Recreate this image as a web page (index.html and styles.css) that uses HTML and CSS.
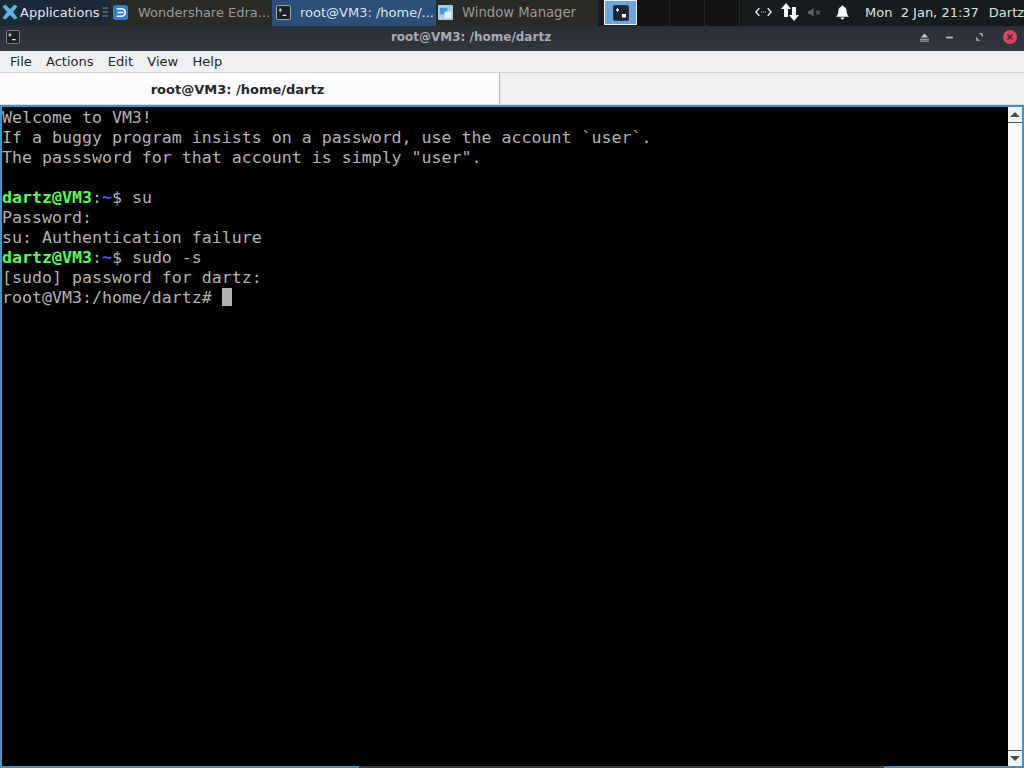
FILE: index.html
```html
<!DOCTYPE html>
<html lang="en">
<head>
<meta charset="utf-8">
<title>root@VM3: /home/dartz</title>
<link rel="stylesheet" href="styles.css">
</head>
<body>
<header class="panel">
  <div class="apps">
    <svg class="xfce" viewBox="0 0 16 16"><path d="M0.500 2.500 L3.500 0.500 L8 5 L12.500 0.500 L15.500 2.500 L11 8 L15.500 14 L12.500 15.500 L8 11 L3.500 15.500 L0.500 14 L5 8 Z" fill="#5fb4e6"/></svg>
    <span>Applications</span>
    <svg class="grip" viewBox="0 0 5 10"><path d="M0 1h5M0 5h5M0 9h5" stroke="#8a9094" stroke-width="1"/></svg>
  </div>
  <div class="task task-dim task-edraw">
    <svg class="ticon" viewBox="0 0 16 16"><rect width="16" height="16" rx="3" fill="#2e7de0"/><path d="M4 4h5a4 4 0 0 1 0 8H4M5 8h6" fill="none" stroke="#fff" stroke-width="1.8"/></svg>
    <span>Wondershare Edra...</span>
  </div>
  <div class="task task-active">
    <svg class="ticon" viewBox="0 0 16 16"><rect x=".5" y=".5" width="15" height="15" rx="1.5" fill="#1c2126" stroke="#aab0b6"/><path d="M3 5.5h3M7 11h4" stroke="#eee" stroke-width="1.4"/><path d="M4.500 3v5" stroke="#eee" stroke-width=".8"/></svg>
    <span>root@VM3: /home/...</span>
  </div>
  <div class="task task-dim task-wm">
    <svg class="ticon" viewBox="0 0 16 16"><rect width="16" height="16" rx="1" fill="#9fd0ee"/><rect x="2" y="3" width="8" height="7" fill="#4a94cf"/><rect x="7" y="7" width="7" height="7" fill="#e8f4fb"/></svg>
    <span>Window Manager</span>
  </div>
  <div class="pager">
    <svg class="pager-icon" viewBox="0 0 16 16"><rect x=".5" y=".5" width="15" height="15" rx="1.5" fill="#1c2634" stroke="#2c3a4c"/><path d="M3 5h3" stroke="#eee" stroke-width="1.6"/><path d="M4.500 3v4" stroke="#eee" stroke-width=".8"/><rect x="9" y="9" width="4" height="3.5" fill="#fff"/></svg>
  </div>
  <div class="pager-rest"><i class="sep"></i><i class="sep"></i><i class="sep"></i></div>
  <div class="tray">
    <svg class="ti-net" viewBox="0 0 18 10"><path d="M4.500 1 L1 5 L4.500 9 M13.500 1 L17 5 L13.500 9" fill="none" stroke="#e6e8ea" stroke-width="1.500"/><path d="M6.500 5h1M8.500 5h1M10.500 5h1" stroke="#e6e8ea"/></svg>
    <svg class="ti-arrows" viewBox="0 0 18 18"><path d="M5 0 L10 6 H7 V14 H3 V6 H0 Z M13 18 L18 12 H15 V4 H11 V12 H8 Z" fill="#f4f6f7"/></svg>
    <svg class="ti-sound" viewBox="0 0 14 10"><path d="M0 3h2.500L6 0v10L2.500 7H0Z" fill="#5b6367"/><path d="M9 3l4 4M13 3l-4 4" stroke="#5b6367" stroke-width="1.300"/></svg>
    <svg class="ti-bell" viewBox="0 0 14 15"><path d="M7 0a1.300 1.300 0 0 1 1.300 1.300C10.800 2 11.500 4 11.500 6.500c0 2.500.8 3.800 2.500 5.500H0c1.700-1.700 2.500-3 2.500-5.500C2.500 4 3.200 2 5.700 1.300A1.300 1.300 0 0 1 7 0ZM5 13h4a2 2 0 0 1-4 0Z" fill="#f6f7f8"/></svg>
    <span class="clock">Mon&nbsp; 2 Jan, 21:37</span>
    <span class="user">Dartz</span>
  </div>
</header>

<div class="titlebar">
  <svg class="win-icon" viewBox="0 0 16 16"><rect x=".5" y=".5" width="15" height="15" rx="1.5" fill="#1c2126" stroke="#8f959b"/><path d="M3 5.500h3M7 11h4" stroke="#eee" stroke-width="1.400"/><path d="M4.500 3v5" stroke="#eee" stroke-width=".8"/></svg>
  <div class="win-title">root@VM3: /home/dartz</div>
  <div class="win-buttons">
    <svg class="wb wb-shade" viewBox="0 0 10 9"><path d="M5 0 L9 4.500 H1 Z" fill="#c2c5c9"/><path d="M0 6.500h10M0 8.500h10" stroke="#c2c5c9"/></svg>
    <svg class="wb wb-min" viewBox="0 0 8 3"><rect y=".5" width="8" height="2" fill="#b4b7bb"/></svg>
    <svg class="wb wb-max" viewBox="0 0 8 9"><path d="M3 0h5v5Z M0 4l5 5H0Z" fill="#8f9296"/></svg>
    <svg class="wb wb-close" viewBox="0 0 14 14"><circle cx="7" cy="7" r="7" fill="#d9465f"/><path d="M4.500 4.500l5 5M9.500 4.500l-5 5" stroke="#5a2430" stroke-width="1.600"/></svg>
  </div>
</div>

<nav class="menubar">
  <span>File</span><span>Actions</span><span>Edit</span><span>View</span><span>Help</span>
</nav>

<div class="tabbar">
  <div class="tab">root@VM3: /home/dartz</div>
</div>

<main class="window-body">
<pre class="terminal">Welcome to VM3!
If a buggy program insists on a password, use the account `user`.
The passsword for that account is simply "user".

<b class="g">dartz@VM3</b>:<b class="p">~</b>$ su
Password: 
su: Authentication failure
<b class="g">dartz@VM3</b>:<b class="p">~</b>$ sudo -s
[sudo] password for dartz: 
root@VM3:/home/dartz# <span class="cursor"> </span></pre>
  <div class="scrollbar">
    <div class="sb-btn sb-up"><i class="arrow-up"></i></div>
    <div class="sb-track"></div>
    <div class="sb-btn sb-down"><i class="arrow-down"></i></div>
  </div>
</main>
<div class="bottom"><div class="bottom-blue"></div><div class="bottom-dark"></div></div>
</body>
</html>
```

FILE: styles.css
```css
* { box-sizing: border-box; }
html, body { margin: 0; height: 100%; }
body {
  width: 1024px;
  height: 768px;
  overflow: hidden;
  display: flex;
  flex-direction: column;
  font-family: "DejaVu Sans", sans-serif;
  font-size: 13px;
  background: #000;
}
svg { display: block; flex: none; }

.panel {
  flex: none;
  height: 26px;
  display: flex;
  align-items: stretch;
  background: #161c1e;
  color: #e4e8ea;
}
.panel > * { flex: none; }
.apps {
  width: 110px;
  display: flex;
  align-items: center;
  padding-left: 2px;
  padding-bottom: 2px;
  background: #1a2a36;
}
.xfce { width: 16px; height: 16px; margin-right: 2px; }
.grip { width: 5px; height: 10px; margin-left: 4px; }
.task {
  display: flex;
  align-items: center;
  padding-bottom: 2px;
  white-space: nowrap;
  overflow: hidden;
}
.ticon { width: 15px; height: 15px; margin-right: 10px; }
.task-dim { background: #2a2a27; color: #9a9a96; }
.task-edraw { width: 162px; padding-left: 3px; }
.task-active { width: 164px; background: #2a4f78; color: #dfe5ec; padding-left: 4px; padding-right: 0; }
.task-active .ticon { margin-right: 9px; }
.task-wm { width: 162px; padding-left: 2px; font-size: 13.200px; }
.task-wm .ticon { margin-right: 9px; }
.pager {
  width: 33px;
  height: 25px;
  margin-left: 6px;
  display: flex;
  align-items: center;
  justify-content: center;
  background: #6aa5dd;
  border: 1px solid #f2f6fa;
}
.pager-icon { width: 16px; height: 16px; }
.pager-rest {
  width: 105px;
  display: flex;
  background: #141414;
  gap: 34px;
  padding-left: 32px;
}
.sep { width: 1px; background: #262626; }
.tray {
  flex: 1 0 0;
  display: flex;
  align-items: center;
  padding-left: 13px;
  padding-bottom: 2px;
  color: #dde1e3;
  white-space: nowrap;
  overflow: hidden;
}
.ti-net { width: 17px; height: 10px; }
.ti-arrows { width: 18px; height: 18px; margin-left: 9px; }
.ti-sound { width: 13px; height: 9px; margin-left: 9px; }
.ti-bell { width: 13px; height: 15px; margin-left: 15px; }
.clock { margin-left: 16px; font-size: 13px; }
.user { margin-left: 10px; font-size: 13px; }

.titlebar {
  flex: none;
  height: 25px;
  display: flex;
  align-items: center;
  background: linear-gradient(#2b2e37, #343743);
  color: #a8abb1;
  padding-left: 6px;
  padding-bottom: 3px;
}
.win-icon { width: 14px; height: 14px; }
.win-title {
  flex: 1;
  padding-left: 2px;
  text-align: center;
  font-size: 12px;
  font-weight: bold;
}
.win-buttons { display: flex; align-items: center; padding-right: 7px; }
.wb-shade { width: 9px; height: 9px; }
.wb-min { width: 7px; height: 3px; margin-left: 17px; }
.wb-max { width: 7px; height: 8px; margin-left: 23px; }
.wb-close { width: 14px; height: 14px; margin-left: 20px; }

.menubar {
  flex: none;
  height: 21px;
  display: flex;
  align-items: center;
  gap: 14.300px;
  padding-left: 10px;
  background: #eff0f1;
  color: #232629;
}
.tabbar {
  flex: none;
  height: 33px;
  display: flex;
  background: #eff0f1;
  border-top: 1px solid #cfd1d3;
  border-bottom: 1px solid #dcdddf;
}
.tab {
  width: 500px;
  display: flex;
  align-items: center;
  justify-content: center;
  padding-right: 24px;
  padding-top: 2px;
  background: #fcfcfc;
  border-right: 1px solid #b5b7b9;
  font-weight: bold;
  color: #232629;
}

.window-body {
  flex: 1;
  min-height: 0;
  display: flex;
  background: #000;
  border-top: 2px solid #3f8dc4;
  border-left: 2px solid #3d97cf;
  border-right: 2px solid #3d97cf;
}
.terminal {
  flex: 1;
  margin: 0;
  padding-top: 1px;
  font-family: "DejaVu Sans Mono", monospace;
  font-size: 16.600px;
  line-height: 20px;
  color: #b2b2b2;
}
.terminal b { font-weight: bold; }
.g { color: #54fe54; }
.p { color: #5454fe; }
.cursor { display: inline-block; width: 10px; height: 18px; background: #b2b2b2; vertical-align: 0; }
.scrollbar {
  flex: none;
  width: 14px;
  display: flex;
  flex-direction: column;
  background: #fafafa;
}
.sb-btn { height: 16px; display: flex; align-items: center; justify-content: center; background: #f4f4f4; }
.sb-up { border-bottom: 1px solid #55585a; }
.sb-down { border-top: 1px solid #55585a; }
.sb-track { flex: 1; background: #fbf9f9; }
.arrow-up, .arrow-down { width: 0; height: 0; border-left: 5px solid transparent; border-right: 5px solid transparent; }
.arrow-up { border-bottom: 5px solid #4b4e50; }
.arrow-down { border-top: 5px solid #4b4e50; }

.bottom { flex: none; height: 2px; display: flex; }
.bottom-blue { width: 359px; background: #3d8fc6; }
.bottom-dark { flex: 1; background: linear-gradient(90deg, #3d3d3d 0, #3d3d3d 525px, #3d8fc6 525px); }
```
